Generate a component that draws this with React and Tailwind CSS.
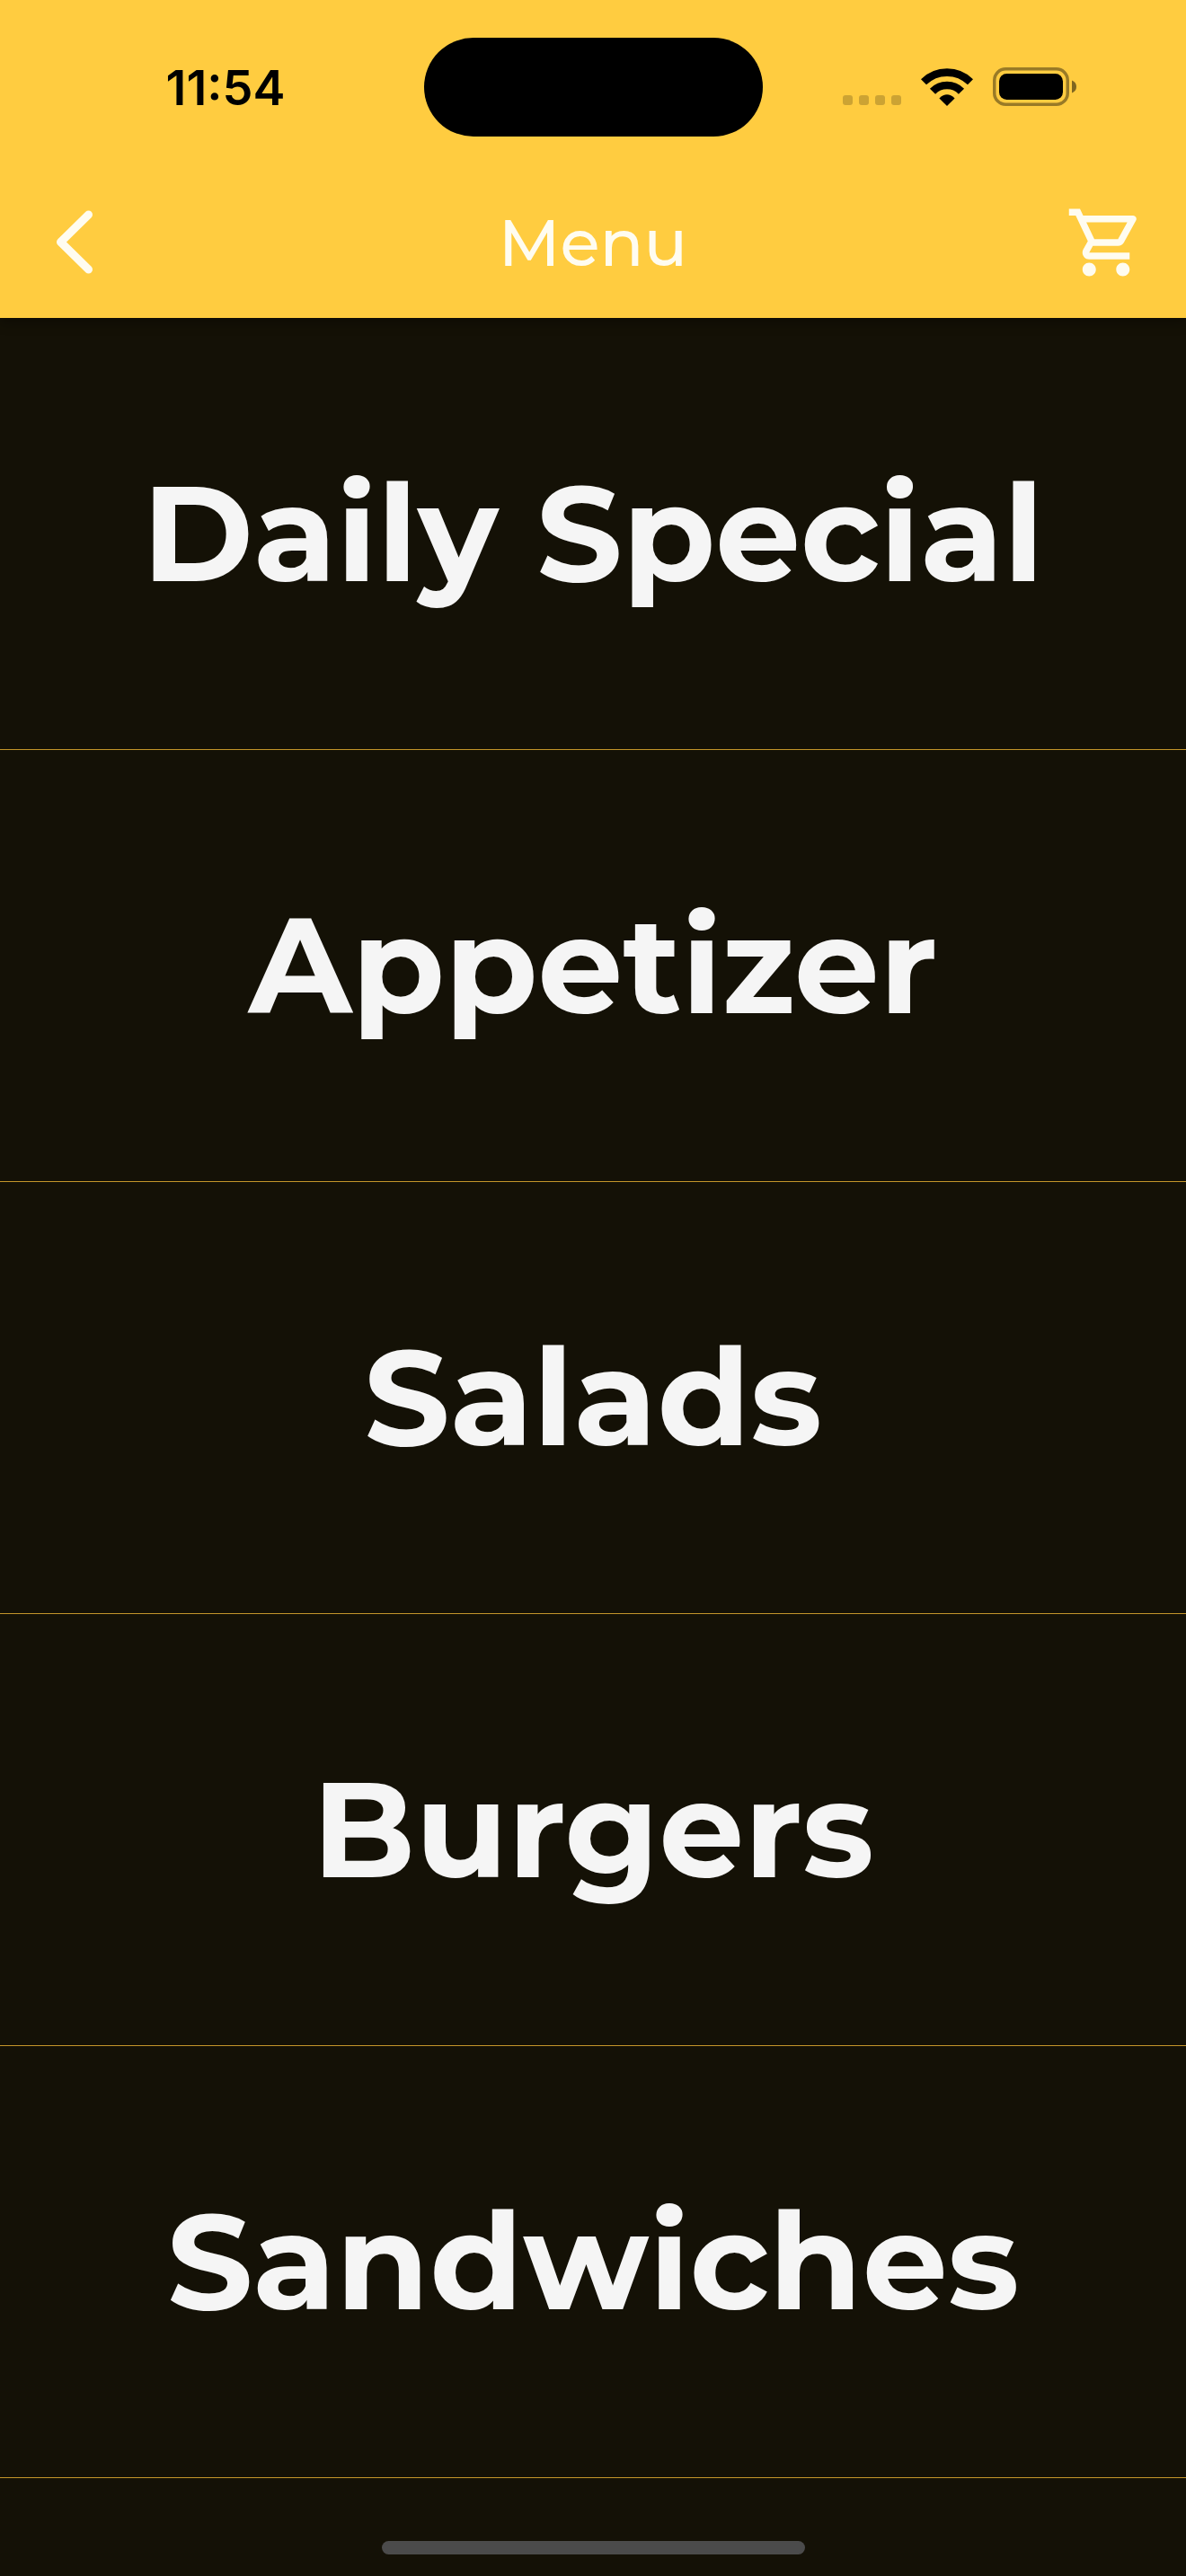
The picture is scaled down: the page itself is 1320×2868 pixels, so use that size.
import { useState } from "react";
import { MdOutlineShoppingCart } from "react-icons/md";

const categories = ["Daily Special", "Appetizer", "Salads", "Burgers", "Sandwiches"];

const SignalDots = () => (
    <div className="flex gap-[7px] pt-[30px]" aria-hidden="true">
        {[0, 1, 2, 3].map((dot) => (
            <span key={dot} className="size-[11px] rounded-[3px] bg-black/20" />
        ))}
    </div>
);

const WifiIcon = () => (
    <svg width="58" height="42" viewBox="0 0 58 42" fill="none" aria-hidden="true">
        <path d="M3 15.3A37 37 0 0 1 55 15.3" stroke="#000" strokeWidth="8.6" />
        <path d="M13 25.7A22.5 22.5 0 0 1 45 25.7" stroke="#000" strokeWidth="8.6" />
        <path d="M29 42 20.4 33.4Q29 25 37.6 33.4Z" fill="#000" />
    </svg>
);

const BatteryIcon = () => (
    <svg width="93" height="43" viewBox="0 0 93 43" aria-hidden="true">
        <rect x="1.75" y="1.75" width="81.5" height="39.5" rx="12.5" fill="none" stroke="#000" strokeOpacity="0.4" strokeWidth="3.5" />
        <rect x="7" y="7" width="71" height="29" rx="8.5" />
        <path d="M88 14.5Q93 16.5 93 21.5T88 28.5Z" fillOpacity="0.5" />
    </svg>
);

const StatusBar = () => (
    <div className="grid h-[177px] grid-cols-3 items-start">
        <div className="flex justify-center pt-[68px] pl-[62px] font-[Inter,sans-serif] text-[54px] leading-[60px] font-semibold text-black">
            11:54
        </div>
        <div className="mt-[42px] h-[110px] w-[377px] justify-self-center rounded-full bg-black" />
        <div className="flex items-center justify-end pt-[75px] pr-[122px]">
            <SignalDots />
            <div className="ml-[22px]">
                <WifiIcon />
            </div>
            <div className="ml-[22px]">
                <BatteryIcon />
            </div>
        </div>
    </div>
);

const Header = () => (
    <header className="relative bg-[#ffcc40] shadow-[0_6px_12px_rgba(0,0,0,0.3)]">
        <StatusBar />
        <nav className="flex h-[177px] items-center justify-between px-11 pt-2 text-[#fffcf0]">
            <button className="w-[90px] pl-[18px]" aria-label="Back">
                <svg width="42" height="71" viewBox="0 0 42 71" fill="none">
                    <path d="M36.5 5 5.5 35.5 36.5 66" stroke="currentColor" strokeWidth="9" strokeLinecap="round" strokeLinejoin="round" />
                </svg>
            </button>
            <h1 className="text-[72px] leading-[90px] font-medium">Menu</h1>
            <button className="flex w-[90px] justify-end" aria-label="Cart">
                <MdOutlineShoppingCart size={90} />
            </button>
        </nav>
    </header>
);

const App = () => {
    const [selected, setSelected] = useState(null);

    return (
        <div className="flex min-h-screen flex-col bg-[#141106] font-[Montserrat,Inter,sans-serif]">
            <Header />
            <main className="flex-1">
                <ul>
                    {categories.map((category) => (
                        <li key={category} className="border-b border-[#c4952a]">
                            <button
                                onClick={() => setSelected(category)}
                                aria-pressed={selected === category}
                                className="h-[480px] w-full text-center text-[150px] leading-[180px] font-bold text-[#f5f5f5]"
                            >
                                {category}
                            </button>
                        </li>
                    ))}
                </ul>
            </main>
            <div className="mx-auto mb-6 h-[15px] w-[471px] rounded-full bg-[#4b4b4b]" />
        </div>
    );
};

export default App;
